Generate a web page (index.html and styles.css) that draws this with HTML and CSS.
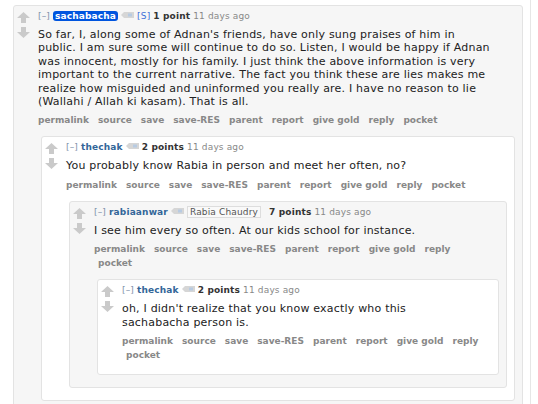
FILE: index.html
```html
<!DOCTYPE html>
<html lang="en">

<head>
  <meta charset="UTF-8" />
  <title>Comments</title>
  <link rel="stylesheet" href="styles.css">
</head>

<body>

  <div class="page">
    <div class="content">

      <div class="comment">
        <div class="midcol">
          <svg class="arrow" viewBox="0 0 13 11"><polygon points="6.5,0 13,6 9,6 9,11 4,11 4,6 0,6" /></svg>
          <svg class="arrow" viewBox="0 0 13 11"><polygon points="6.5,11 13,5 9,5 9,0 4,0 4,5 0,5" /></svg>
        </div>
        <div class="entry">
          <p class="tagline">
            <span class="expand">[–]</span>
            <a class="author submitter" href="#">sachabacha</a>
            <svg class="res-tag" viewBox="0 0 13 6"><polygon points="0,3 3,0 13,0 13,6 3,6" /><rect x="7" y="1.5" width="4" height="3" /></svg>
            <span class="op-mark">[S]</span>
            <span class="score">1 point</span> 11 days ago
          </p>
          <div class="md">
            <p>So far, I, along some of Adnan's friends, have only sung praises of him in public. I am sure some will continue to do so. Listen, I would be happy if Adnan was innocent, mostly for his family. I just think the above information is very important to the current narrative. The fact you think these are lies makes me realize how misguided and uninformed you really are. I have no reason to lie (Wallahi / Allah ki kasam). That is all.</p>
          </div>
          <ul class="buttons">
            <li><a href="#">permalink</a></li>
            <li><a href="#">source</a></li>
            <li><a href="#">save</a></li>
            <li><a href="#">save-RES</a></li>
            <li><a href="#">parent</a></li>
            <li><a href="#">report</a></li>
            <li><a href="#">give gold</a></li>
            <li><a href="#">reply</a></li>
            <li><a href="#">pocket</a></li>
          </ul>

          <div class="child">
            <div class="comment even">
              <div class="midcol">
                <svg class="arrow" viewBox="0 0 13 11"><polygon points="6.5,0 13,6 9,6 9,11 4,11 4,6 0,6" /></svg>
                <svg class="arrow" viewBox="0 0 13 11"><polygon points="6.5,11 13,5 9,5 9,0 4,0 4,5 0,5" /></svg>
              </div>
              <div class="entry">
                <p class="tagline">
                  <span class="expand">[–]</span>
                  <a class="author" href="#">thechak</a>
                  <svg class="res-tag" viewBox="0 0 13 6"><polygon points="0,3 3,0 13,0 13,6 3,6" /><rect x="7" y="1.5" width="4" height="3" /></svg>
                  <span class="score">2 points</span> 11 days ago
                </p>
                <div class="md">
                  <p>You probably know Rabia in person and meet her often, no?</p>
                </div>
                <ul class="buttons">
                  <li><a href="#">permalink</a></li>
                  <li><a href="#">source</a></li>
                  <li><a href="#">save</a></li>
                  <li><a href="#">save-RES</a></li>
                  <li><a href="#">parent</a></li>
                  <li><a href="#">report</a></li>
                  <li><a href="#">give gold</a></li>
                  <li><a href="#">reply</a></li>
                  <li><a href="#">pocket</a></li>
                </ul>

                <div class="child">
                  <div class="comment">
                    <div class="midcol">
                      <svg class="arrow" viewBox="0 0 13 11"><polygon points="6.5,0 13,6 9,6 9,11 4,11 4,6 0,6" /></svg>
                      <svg class="arrow" viewBox="0 0 13 11"><polygon points="6.5,11 13,5 9,5 9,0 4,0 4,5 0,5" /></svg>
                    </div>
                    <div class="entry">
                      <p class="tagline">
                        <span class="expand">[–]</span>
                        <a class="author" href="#">rabiaanwar</a>
                        <svg class="res-tag" viewBox="0 0 13 6"><polygon points="0,3 3,0 13,0 13,6 3,6" /><rect x="7" y="1.5" width="4" height="3" /></svg>
                        <span class="flair">Rabia Chaudry</span>
                        <span class="score">7 points</span> 11 days ago
                      </p>
                      <div class="md">
                        <p>I see him every so often. At our kids school for instance.</p>
                      </div>
                      <ul class="buttons">
                        <li><a href="#">permalink</a></li>
                        <li><a href="#">source</a></li>
                        <li><a href="#">save</a></li>
                        <li><a href="#">save-RES</a></li>
                        <li><a href="#">parent</a></li>
                        <li><a href="#">report</a></li>
                        <li><a href="#">give gold</a></li>
                        <li><a href="#">reply</a></li>
                        <li><a href="#">pocket</a></li>
                      </ul>

                      <div class="child">
                        <div class="comment even">
                          <div class="midcol">
                            <svg class="arrow" viewBox="0 0 13 11"><polygon points="6.5,0 13,6 9,6 9,11 4,11 4,6 0,6" /></svg>
                            <svg class="arrow" viewBox="0 0 13 11"><polygon points="6.5,11 13,5 9,5 9,0 4,0 4,5 0,5" /></svg>
                          </div>
                          <div class="entry">
                            <p class="tagline">
                              <span class="expand">[–]</span>
                              <a class="author" href="#">thechak</a>
                              <svg class="res-tag" viewBox="0 0 13 6"><polygon points="0,3 3,0 13,0 13,6 3,6" /><rect x="7" y="1.5" width="4" height="3" /></svg>
                              <span class="score">2 points</span> 11 days ago
                            </p>
                            <div class="md">
                              <p>oh, I didn't realize that you know exactly who this sachabacha person is.</p>
                            </div>
                            <ul class="buttons">
                              <li><a href="#">permalink</a></li>
                              <li><a href="#">source</a></li>
                              <li><a href="#">save</a></li>
                              <li><a href="#">save-RES</a></li>
                              <li><a href="#">parent</a></li>
                              <li><a href="#">report</a></li>
                              <li><a href="#">give gold</a></li>
                              <li><a href="#">reply</a></li>
                              <li><a href="#">pocket</a></li>
                            </ul>
                          </div>
                        </div>
                      </div>

                    </div>
                  </div>
                </div>

              </div>
            </div>
          </div>

        </div>
      </div>

    </div>
    <div class="side"></div>
  </div>

</body>

</html>
```

FILE: styles.css
```css
body {
  margin: 0;
  background: #fff;
  color: #222;
  font-family: "DejaVu Sans", Verdana, sans-serif;
  overflow: hidden;
}
.page {
  display: flex;
  min-height: 404px;
}
.content {
  flex: 1;
  padding: 5px 7px 0 13px;
}
.side {
  width: 7px;
  border-left: 1px solid #e6e6e6;
}
.comment {
  display: flex;
  align-items: flex-start;
  background: #f6f6f6;
  border: 1px solid #e3e3e3;
  border-radius: 3px;
  padding: 4px 7px 12px 0;
}
.comment.even {
  background: #fff;
}
.midcol {
  flex: none;
  width: 24px;
  padding-top: 2px;
}
.arrow {
  display: block;
  width: 13px;
  height: 11px;
  margin: 0 0 4px 3px;
  fill: #cacaca;
}
.entry {
  flex: 1;
  min-width: 0;
}
.tagline {
  margin: 0;
  font-size: 9px;
  line-height: 13px;
  letter-spacing: 0.15px;
  color: #888;
}
.expand {
  color: #7f93ab;
}
.author {
  color: #369;
  font-weight: bold;
  text-decoration: none;
}
.author.submitter {
  background: #0055df;
  color: #fff;
  padding: 0 2px;
  border-radius: 3px;
}
.res-tag {
  width: 13px;
  height: 6px;
  vertical-align: 1px;
  fill: #d6d6d6;
}
.res-tag rect {
  fill: #b8cbe2;
}
.op-mark {
  color: #3f6fd8;
}
.score {
  color: #333;
  font-weight: bold;
}
.flair {
  border: 1px solid #ddd;
  background: #f9f9f9;
  color: #545454;
  padding: 0 2px;
  margin-right: 5px;
}
.md {
  margin: 5px 22px 0 0;
  font-size: 11px;
  line-height: 13.4px;
  letter-spacing: 0.2px;
}
.md p {
  margin: 0;
}
.buttons {
  list-style: none;
  margin: 5px 10px 0 0;
  padding: 0;
  display: flex;
  flex-wrap: wrap;
  column-gap: 5px;
  font-size: 9px;
  line-height: 14px;
  font-weight: bold;
}
.buttons li + li {
  padding-left: 4px;
}
.buttons a {
  color: #888;
  text-decoration: none;
}
.child {
  margin: 9px 0 0 3px;
}
```
